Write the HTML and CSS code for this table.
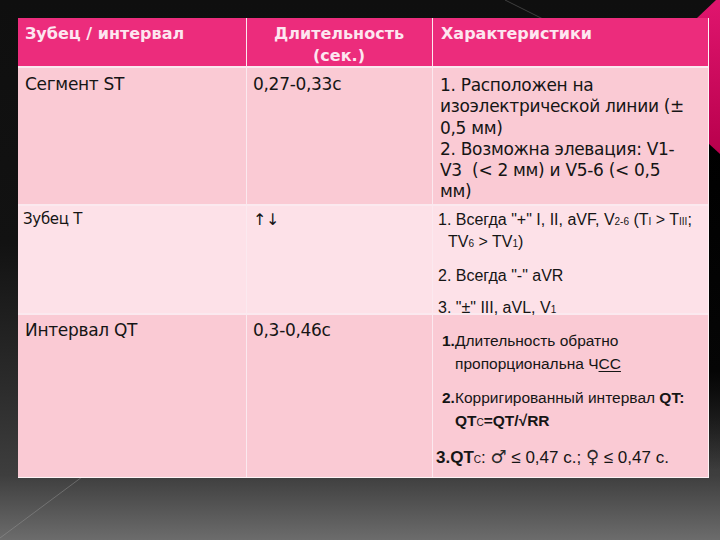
FILE: index.html
```html
<!DOCTYPE html>
<html lang="ru">
<head>
<meta charset="utf-8">
<title>Зубец / интервал</title>
<link rel="stylesheet" href="styles.css">
</head>
<body>
<div class="slide">
  <svg class="deco" width="720" height="540" viewBox="0 0 720 540">
    <defs>
      <linearGradient id="pk" x1="0" y1="0" x2="0" y2="1">
        <stop offset="0" stop-color="#e0156e"/>
        <stop offset="1" stop-color="#b8004c"/>
      </linearGradient>
      <linearGradient id="rs" x1="0" y1="0" x2="0" y2="1">
        <stop offset="0" stop-color="#000"/>
        <stop offset="0.7" stop-color="#050505"/>
        <stop offset="1" stop-color="#050505" stop-opacity="0"/>
      </linearGradient>
    </defs>
    <rect x="708" y="140" width="12" height="330" fill="url(#rs)"/>
    <line x1="505" y1="0" x2="545" y2="20" stroke="#7a7a7a" stroke-width="1" opacity="0.45"/>
    <line x1="0" y1="538" x2="82" y2="477" stroke="#9a9a9a" stroke-width="1" opacity="0.45"/>
    <polygon points="697,18 716,0 720,0 720,154 708,143" fill="url(#pk)"/>
  </svg>
  <div class="table">
    <div class="cell head c1">Зубец / интервал</div>
    <div class="cell head c2">Длительность<br>(сек.)</div>
    <div class="cell head c3">Характеристики</div>

    <div class="cell r1 c1">Сегмент ST</div>
    <div class="cell r1 c2">0,27-0,33с</div>
    <div class="cell r1 c3 lines">1. Расположен на<br>изоэлектрической линии (±<br>0,5 мм)<br>2. Возможна элевация: V1-<br>V3&nbsp; (&lt; 2 мм) и V5-6 (&lt; 0,5<br>мм)</div>

    <div class="cell r2 c1 small">Зубец Т</div>
    <div class="cell r2 c2 arrows">↑↓</div>
    <div class="cell r2 c3 arial">
      <p class="item">1. Всегда "+" I, II, aVF, V<span class="sm">2-6</span> (T<span class="sm">I</span> &gt; T<span class="sm">III</span>;<br>TV<span class="sm">6</span> &gt; TV<span class="sm">1</span>)</p>
      <p class="item">2. Всегда "-" aVR</p>
      <p class="item">3. "±" III, aVL, V<span class="sm">1</span></p>
    </div>

    <div class="cell r3 c1">Интервал QT</div>
    <div class="cell r3 c2">0,3-0,46с</div>
    <div class="cell r3 c3 arial qt">
      <p class="item"><b>1.</b>Длительность обратно<br>пропорциональна Ч<u>СС</u></p>
      <p class="item"><b>2.</b>Корригированный интервал <b>QT:</b><br><b>QT</b><span class="sm">C</span><b>=QT/√RR</b></p>
      <p class="item big"><b>3.QT</b><span class="sm">C</span>: <span class="sym">♂</span> ≤ 0,47 с.; <span class="sym">♀</span> ≤ 0,47 с.</p>
    </div>
  </div>
</div>
</body>
</html>
```

FILE: styles.css
```css
html, body {
  margin: 0;
  padding: 0;
}

body {
  width: 720px;
  height: 540px;
  overflow: hidden;
  background: #111;
}

.slide {
  position: relative;
  width: 720px;
  height: 540px;
  padding: 18px 0 0 18px;
  box-sizing: border-box;
  background: linear-gradient(180deg, #0f0f0f 0%, #121212 45%, #2c2c2c 72%, #3e3e3e 88%, #6c6c6c 100%);
  font-family: "DejaVu Sans", "Noto Sans", sans-serif;
  color: #151515;
}

.deco {
  position: absolute;
  left: 0;
  top: 0;
}

.table {
  position: relative;
  width: 690px;
  display: grid;
  grid-template-columns: 228px 185px 275px;
  grid-template-rows: 48px 136px 107px 162px;
  gap: 2px 1px;
  background: #fbe9ef;
  border-right: 1px solid #fdf3f6;
  border-bottom: 1px solid #fdf3f6;
}

.cell {
  box-sizing: border-box;
  padding: 6px 7px 0 7px;
  font-size: 17px;
  letter-spacing: -0.3px;
  line-height: 21.3px;
}

.head {
  background: #ec2c7c;
  color: #fde6f0;
  font-weight: bold;
  font-size: 16px;
  letter-spacing: 0;
  line-height: 22px;
  padding-top: 5px;
}

.head.c2 {
  text-align: center;
}

.head.c3 {
  padding-left: 8px;
}

.c2 {
  padding-left: 6px;
}

.r1, .r3 {
  background: #facad4;
}

.r2 {
  background: #fde1e8;
}

.r3.c1, .r3.c2 {
  padding-top: 5px;
}

.lines {
  white-space: nowrap;
  padding-top: 7px;
}

.small {
  font-size: 15px;
  line-height: 18px;
  padding-top: 4px;
  padding-left: 5px;
}

.arrows {
  font-size: 16px;
  line-height: 18px;
  padding-top: 5px;
}

.arial {
  font-family: "Liberation Sans", Arial, sans-serif;
  font-size: 16px;
  letter-spacing: 0;
  line-height: 20px;
  padding: 4px 4px 0 5px;
  white-space: nowrap;
}

.item {
  margin: 0 0 12px 0;
  padding-left: 10px;
  text-indent: -10px;
}

.sm {
  font-size: 10px;
  font-weight: normal;
}

.qt {
  font-size: 15.5px;
  line-height: 23px;
  padding: 14px 4px 0 9px;
}

.qt .item {
  margin-bottom: 11px;
  padding-left: 13px;
  text-indent: -13px;
}

.qt .item.big {
  font-size: 17px;
  margin-left: -6px;
}

.sym {
  font-family: "DejaVu Sans", sans-serif;
  font-size: 18px;
  font-weight: normal;
  color: #2a2a2a;
}

.qt u {
  text-decoration-thickness: 1px;
  text-underline-offset: 2px;
}
```
